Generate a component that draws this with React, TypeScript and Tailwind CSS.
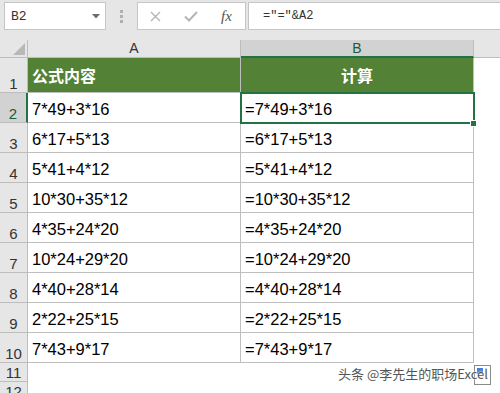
import React from "react";

const rows: [string, string][] = [
  ["7*49+3*16", "=7*49+3*16"],
  ["6*17+5*13", "=6*17+5*13"],
  ["5*41+4*12", "=5*41+4*12"],
  ["10*30+35*12", "=10*30+35*12"],
  ["4*35+24*20", "=4*35+24*20"],
  ["10*24+29*20", "=10*24+29*20"],
  ["4*40+28*14", "=4*40+28*14"],
  ["2*22+25*15", "=2*22+25*15"],
  ["7*43+9*17", "=7*43+9*17"],
];

const sans = { fontFamily: '"Liberation Sans", Arial, sans-serif' };

export default function App() {
  return (
    <div
      className="relative w-[500px] h-[393px] overflow-hidden bg-white"
      style={{ fontFamily: '"Liberation Sans", "Noto Sans CJK SC", sans-serif' }}
    >
      {/* formula bar */}
      <div className="h-[40px] bg-[#e6e6e6] flex items-start pt-[2px] pl-[4px]">
        <div className="w-[102px] h-[28px] bg-white border border-[#c6c6c6] flex items-center justify-between pl-[6px] pr-[5px]">
          <span className="text-[13px] text-[#333] leading-none" style={{ fontFamily: '"Liberation Mono", monospace' }}>
            B2
          </span>
          <svg width="8" height="5" viewBox="0 0 8 5">
            <path d="M0 0 H8 L4 4.5 Z" fill="#6b6b6b" />
          </svg>
        </div>
        <div className="w-[31px] h-[28px] flex flex-col items-center justify-center gap-[2px]">
          <div className="w-[3px] h-[3px] bg-[#b0b0b0]" />
          <div className="w-[3px] h-[3px] bg-[#b0b0b0]" />
          <div className="w-[3px] h-[3px] bg-[#b0b0b0]" />
        </div>
        <div className="w-[109px] h-[28px] bg-white border border-[#c6c6c6] flex items-center">
          <svg className="ml-[12px]" width="11" height="11" viewBox="0 0 11 11">
            <path d="M1 1 L10 10 M10 1 L1 10" stroke="#b5b5b5" strokeWidth="1.4" />
          </svg>
          <svg className="ml-[23px]" width="14" height="11" viewBox="0 0 14 11">
            <path d="M1 5.5 L5 9.5 L13 1" stroke="#b5b5b5" strokeWidth="2" fill="none" />
          </svg>
          <span
            className="ml-[23px] text-[15px] italic text-[#555] leading-none"
            style={{ fontFamily: '"Liberation Serif", serif' }}
          >
            fx
          </span>
        </div>
        <div className="ml-[2px] flex-1 h-[28px] bg-white border border-r-0 border-[#c6c6c6] flex items-center pl-[14px]">
          <span className="text-[12px] text-[#333] leading-none" style={{ fontFamily: '"Liberation Mono", monospace' }}>
            ="="&amp;A2
          </span>
        </div>
      </div>

      {/* column headers */}
      <div className="flex h-[18px]" style={sans}>
        <div className="w-[28px] bg-[#e6e6e6] border-r border-b border-[#bdbdbd] flex items-end justify-end pr-[2px] pb-[2px]">
          <svg width="12" height="12" viewBox="0 0 12 12">
            <path d="M12 0 V12 H0 Z" fill="#b8b8b8" />
          </svg>
        </div>
        <div className="w-[213px] bg-[#e6e6e6] border-r border-b border-[#bdbdbd] flex items-center justify-center text-[14px] text-[#333]">
          A
        </div>
        <div className="w-[233px] bg-[#d2d2d2] border-r border-[#bdbdbd] border-b-2 border-b-[#217346] flex items-center justify-center text-[14px] text-[#1d5a36]">
          B
        </div>
        <div className="flex-1 bg-[#e6e6e6] border-b border-[#bdbdbd]" />
      </div>

      {/* row 1 */}
      <div className="flex h-[35px]">
        <div className="w-[28px] bg-[#e6e6e6] border-r border-b border-[#bdbdbd] flex items-end justify-center pb-[1px] text-[15px] text-[#333] leading-none" style={sans}>
          1
        </div>
        <div className="w-[213px] bg-[#538135] border-r border-b border-[#bfbfbf] flex items-center pl-[4px] pt-[4px] text-[16px] font-bold text-white">
          公式内容
        </div>
        <div className="w-[233px] bg-[#538135] border-r border-b border-[#bfbfbf] flex items-center justify-center pt-[4px] text-[16px] font-bold text-white">
          计算
        </div>
        <div className="flex-1" />
      </div>

      {rows.map(([a, b], i) => {
        const sel = i === 0;
        return (
          <div key={i} className="flex h-[30px]" style={sans}>
            <div
              className={
                sel
                  ? "w-[28px] bg-[#d2d2d2] border-r-2 border-r-[#217346] border-b border-b-[#bdbdbd] flex items-end justify-center pb-[1px] text-[15px] text-[#1d5a36] leading-none"
                  : "w-[28px] bg-[#e6e6e6] border-r border-b border-[#bdbdbd] flex items-end justify-center pb-[1px] text-[15px] text-[#333] leading-none"
              }
            >
              {i + 2}
            </div>
            <div className="w-[213px] border-r border-b border-[#bfbfbf] flex items-center pl-[4px] pt-[3px] text-[16.5px] text-black">
              {a}
            </div>
            <div className="w-[233px] border-r border-b border-[#bfbfbf] flex items-center pl-[4px] pt-[3px] text-[16.5px] text-black">
              {b}
            </div>
            <div className="flex-1" />
          </div>
        );
      })}

      {/* rows 11, 12 */}
      {[11, 12].map((n) => (
        <div key={n} className="flex h-[19px]" style={sans}>
          <div className="w-[28px] bg-[#e6e6e6] border-r border-b border-[#bdbdbd] flex items-end justify-center pb-[1px] text-[15px] text-[#333] leading-none">
            {n}
          </div>
          <div className="flex-1" />
        </div>
      ))}

      {/* selection */}
      <div className="absolute left-[240px] top-[92px] w-[235px] h-[32px] border-2 border-[#217346]" />
      <div className="absolute left-[470px] top-[120px] w-[7px] h-[7px] bg-[#217346] border border-white" />

      {/* watermark */}
      <div className="absolute left-[474px] top-[365px] w-[17px] h-[20px] border border-[#8a8a8a] bg-white">
        <div className="absolute left-[2px] top-[2px] w-[6px] h-[6px] bg-[#3f7fe0]" />
      </div>
      <div
        className="absolute left-[338px] top-[367px] text-[13px] text-[#555] leading-none whitespace-nowrap"
        style={{
          fontFamily: '"Noto Sans CJK SC", sans-serif',
          textShadow: "0 0 2px #fff, 0 0 2px #fff",
        }}
      >
        头条 @李先生的职场Excel
      </div>
    </div>
  );
}
